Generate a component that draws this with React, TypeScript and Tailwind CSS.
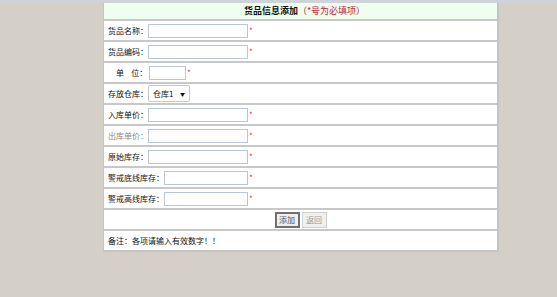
import React from 'react'

const font = { fontFamily: '"SimSun", "Noto Sans CJK SC", sans-serif' }

function Field({ w = 'w-[100px]' }: { w?: string }) {
  return (
    <span className="flex items-center">
      <span className={`${w} h-[14px] border border-[#b8c7d3] bg-white`} />
      <span className="ml-[1px] text-[8px] leading-none text-[#e0304a]">*</span>
    </span>
  )
}

function Row({ children, muted = false }: { children: React.ReactNode; muted?: boolean }) {
  return (
    <div className={`flex h-[21px] items-center border-b-2 border-[#c8c8c8] pl-[4px] text-[8px] ${muted ? 'text-[#888]' : 'text-[#111]'}`}>
      {children}
    </div>
  )
}

export default function App() {
  return (
    <div className="min-h-[297px] bg-[#d4d0c8]" style={font}>
      <div className="h-[3px] bg-[#cdd3d8]" />
      <div className="ml-[103px] w-[396px] border-l border-r-2 border-b-2 border-[#c4c4c4] bg-white">
        <div className="flex h-[18px] items-center justify-center border-b-2 border-[#c8c8c8] bg-[#eefff0] pl-[8px] text-[9px]">
          <span className="font-bold text-[#111]">货品信息添加</span>
          <span className="text-[#cc2233]">（*号为必填项）</span>
        </div>
        <Row>
          <span className="w-[40px]">货品名称：</span>
          <Field />
        </Row>
        <Row>
          <span className="w-[40px]">货品编码：</span>
          <Field />
        </Row>
        <Row>
          <span className="w-[41px] pl-[8px]">单&nbsp;&nbsp;&nbsp;&nbsp;位：</span>
          <Field w="w-[37px]" />
        </Row>
        <Row>
          <span className="w-[40px]">存放仓库：</span>
          <span className="flex h-[17px] w-[42px] items-center justify-between rounded-[2px] border border-[#c8c8c8] bg-white px-[4px] text-[8px]">
            仓库1
            <span className="text-[5px]">▼</span>
          </span>
        </Row>
        <Row>
          <span className="w-[40px]">入库单价：</span>
          <Field />
        </Row>
        <Row muted>
          <span className="w-[40px]">出库单价：</span>
          <Field />
        </Row>
        <Row>
          <span className="w-[40px]">原始库存：</span>
          <Field />
        </Row>
        <Row>
          <span className="w-[56px]">警戒底线库存：</span>
          <Field w="w-[84px]" />
        </Row>
        <Row>
          <span className="w-[56px]">警戒高线库存：</span>
          <Field w="w-[84px]" />
        </Row>
        <div className="flex h-[21px] items-center justify-center gap-[2px] border-b-2 border-[#c8c8c8] text-[8px]">
          <span className="flex h-[16px] w-[25px] items-center justify-center border-2 border-[#707070] bg-[#eeeeee] text-[#555]">添加</span>
          <span className="flex h-[16px] w-[25px] items-center justify-center border border-[#d0d0d0] bg-[#f0f0f0] text-[#999]">返回</span>
        </div>
        <div className="flex h-[19px] items-center pl-[4px] text-[8px] text-[#111]">
          备注：各项请输入有效数字！！
        </div>
      </div>
    </div>
  )
}
